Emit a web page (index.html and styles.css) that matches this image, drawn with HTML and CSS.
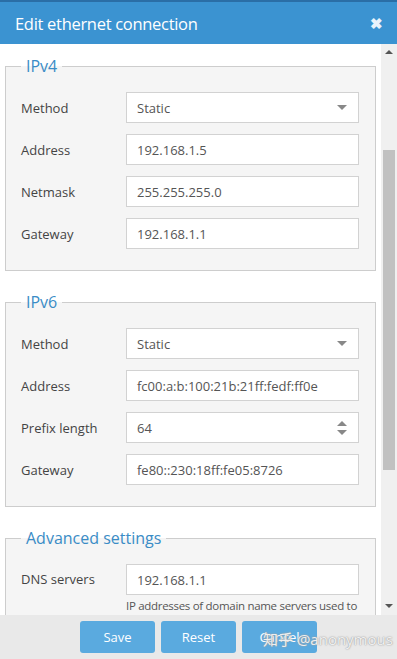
FILE: index.html
```html
<!DOCTYPE html>
<html lang="en">

<head>
    <meta charset="UTF-8">
    <title>Edit ethernet connection</title>
    <link rel="stylesheet" href="styles.css">
</head>

<body>
    <div class="dialog">
        <header class="titlebar">
            <h1>Edit ethernet connection</h1>
            <span class="close">&#10006;</span>
        </header>

        <div class="body">
            <div class="content">
                <fieldset>
                    <legend>IPv4</legend>
                    <div class="row">
                        <label>Method</label>
                        <div class="field select">Static<span class="caret"></span></div>
                    </div>
                    <div class="row">
                        <label>Address</label>
                        <div class="field">192.168.1.5</div>
                    </div>
                    <div class="row">
                        <label>Netmask</label>
                        <div class="field">255.255.255.0</div>
                    </div>
                    <div class="row">
                        <label>Gateway</label>
                        <div class="field">192.168.1.1</div>
                    </div>
                </fieldset>

                <fieldset>
                    <legend>IPv6</legend>
                    <div class="row">
                        <label>Method</label>
                        <div class="field select">Static<span class="caret"></span></div>
                    </div>
                    <div class="row">
                        <label>Address</label>
                        <div class="field">fc00:a:b:100:21b:21ff:fedf:ff0e</div>
                    </div>
                    <div class="row">
                        <label>Prefix length</label>
                        <div class="field number">64<span class="spin"><i class="up"></i><i class="down"></i></span></div>
                    </div>
                    <div class="row">
                        <label>Gateway</label>
                        <div class="field">fe80::230:18ff:fe05:8726</div>
                    </div>
                </fieldset>

                <fieldset>
                    <legend>Advanced settings</legend>
                    <div class="row top">
                        <label>DNS servers</label>
                        <div class="col">
                            <div class="field">192.168.1.1</div>
                            <p class="help">IP addresses of domain name servers used to resolve host names</p>
                        </div>
                    </div>
                </fieldset>
            </div>

            <div class="scrollbar">
                <span class="arrow-up"></span>
                <div class="track"><div class="thumb"></div></div>
                <span class="arrow-down"></span>
            </div>
        </div>

        <footer class="buttons">
            <button>Save</button>
            <button>Reset</button>
            <button>Cancel</button>
            <span class="watermark">知乎 @anonymous</span>
        </footer>
    </div>
</body>

</html>
```

FILE: styles.css
```css
* {
    font-family: 'Open Sans', sans-serif;
    margin: 0;
    padding: 0;
    box-sizing: border-box;
}

body {
    background-color: white;
    width: 397px;
    height: 659px;
    overflow: hidden;
}

.dialog {
    display: flex;
    flex-direction: column;
    height: 659px;
}

.titlebar {
    height: 44px;
    background-color: #3b93d1;
    border-top: 2px solid #2a6ea6;
    display: flex;
    align-items: center;
    justify-content: space-between;
    padding: 0 14px 0 15px;
    color: white;
}

.titlebar h1 {
    font-size: 16.5px;
    font-weight: normal;
    letter-spacing: -0.3px;
}

.close {
    font-size: 15px;
    font-weight: bold;
    color: #e9f3fb;
}

.body {
    height: 571px;
    display: flex;
    overflow: hidden;
}

.content {
    flex: 1;
    padding-top: 10px;
}

fieldset {
    margin: 0 5px 19px 5px;
    border: 1px solid #cdcdcd;
    background-color: #f5f5f5;
    padding: 14px 16px 21px 15px;
}

legend {
    color: #3a8cc6;
    font-size: 16px;
    line-height: 24px;
    padding: 0 5px;
    margin-left: 0;
}

.row {
    display: flex;
    align-items: center;
    margin-bottom: 11px;
}

.row:last-child {
    margin-bottom: 0;
}

.row.top {
    align-items: flex-start;
}

.row.top label {
    line-height: 31px;
}

label {
    width: 105px;
    font-size: 13px;
    color: #444;
}

.col {
    flex: 1;
}

.field {
    flex: 1;
    height: 31px;
    background: white;
    border: 1px solid #d2d2d2;
    font-size: 13px;
    color: #555;
    padding: 0 10px;
    display: flex;
    align-items: center;
    justify-content: space-between;
}

.caret {
    border-left: 5px solid transparent;
    border-right: 5px solid transparent;
    border-top: 5px solid #888;
    margin-right: 1px;
}

.spin {
    display: flex;
    flex-direction: column;
    gap: 4px;
    margin-right: 1px;
}

.spin i {
    border-left: 5px solid transparent;
    border-right: 5px solid transparent;
}

.spin .up {
    border-bottom: 5px solid #888;
}

.spin .down {
    border-top: 5px solid #888;
}

.help {
    font-size: 11.5px;
    letter-spacing: -0.3px;
    color: #555;
    line-height: 17px;
    margin-top: 2px;
}

.scrollbar {
    width: 16px;
    background-color: #f0f0f0;
    display: flex;
    flex-direction: column;
    align-items: center;
}

.arrow-up {
    margin: 6px 0 0;
    border-left: 4px solid transparent;
    border-right: 4px solid transparent;
    border-bottom: 4px solid #555;
}

.track {
    flex: 1;
    width: 100%;
    padding: 96px 2px 0 2px;
}

.thumb {
    height: 320px;
    background-color: #c1c1c1;
}

.arrow-down {
    margin: 0 0 7px;
    border-left: 4px solid transparent;
    border-right: 4px solid transparent;
    border-top: 4px solid #555;
}

.buttons {
    flex: 1;
    background-color: #e9e9e9;
    display: flex;
    justify-content: center;
    align-items: flex-start;
    padding-top: 6px;
    gap: 6px;
    position: relative;
}

.buttons button {
    width: 75px;
    height: 32px;
    border: none;
    border-radius: 3px;
    background-color: #5aaadf;
    color: white;
    font-size: 13px;
}

.watermark {
    position: absolute;
    left: 263px;
    top: 13px;
    font-size: 15px;
    color: rgba(255, 255, 255, 0.85);
    text-shadow: 0 0 1px #999, 0 0 2px #aaa;
    font-family: 'Open Sans', 'Noto Sans CJK SC', sans-serif;
}
```
